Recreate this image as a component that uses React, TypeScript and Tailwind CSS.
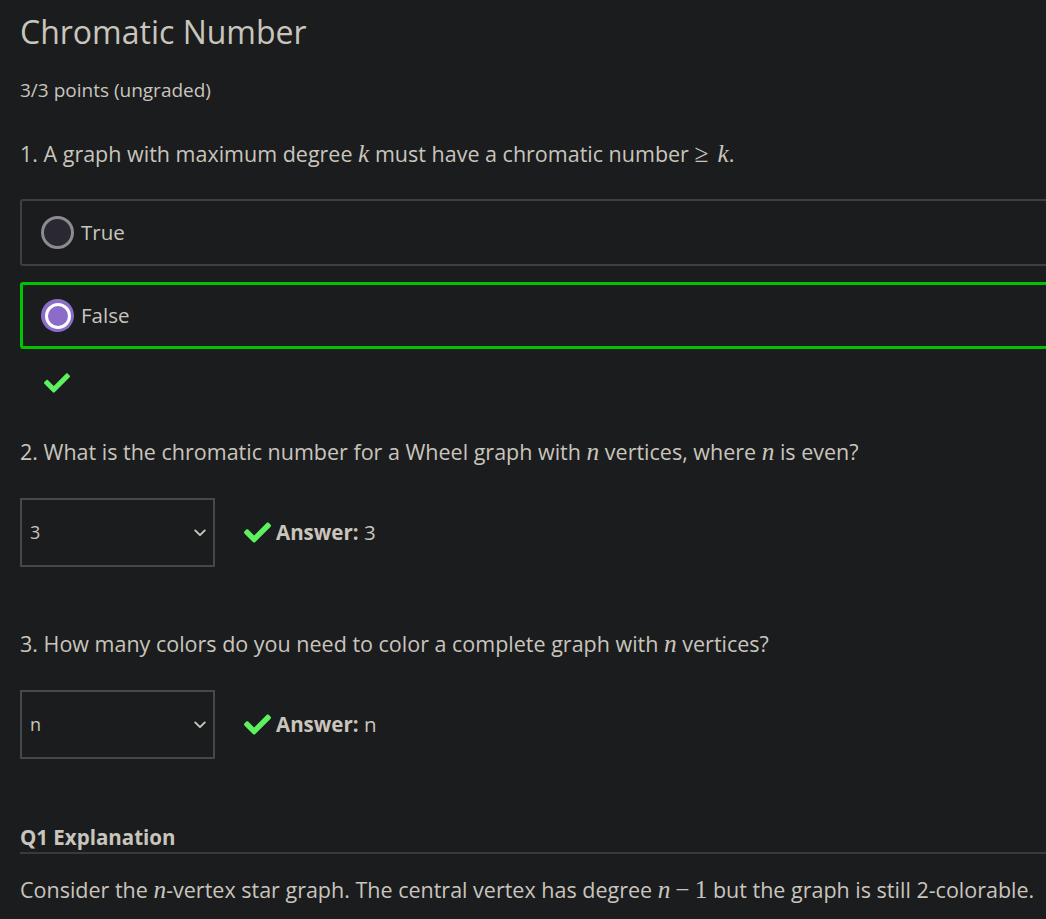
import React from 'react';
import { FaCheck } from 'react-icons/fa';

// Inline math in the KaTeX style, rendered with a serif italic.
const M: React.FC<{ children: React.ReactNode; italic?: boolean }> = ({ children, italic = true }) => (
  <span className={`font-['Liberation_Serif',serif] text-[1.18em] leading-none ${italic ? 'italic' : ''}`}>{children}</span>
);

const Chevron = () => (
  <svg viewBox="0 0 12 8" className="w-[12px] h-[8px]" fill="none">
    <path d="M1.2 1.4 L6 6.2 L10.8 1.4" stroke="#cfcbc4" strokeWidth="1.8" strokeLinecap="round" strokeLinejoin="round" />
  </svg>
);

interface OptionProps {
  label: string;
  selected?: boolean;
}

// Radio option row of a multiple choice question.
const Option: React.FC<OptionProps> = ({ label, selected }) => (
  <div
    className={
      selected
        ? 'flex items-center h-[67px] pl-[18px] border-[3px] border-[#00c400] rounded-[3px]'
        : 'flex items-center h-[67px] pl-[19px] border-2 border-[#3e3f42] rounded-[3px]'
    }
  >
    {selected ? (
      <span className="w-[33px] h-[33px] rounded-full bg-[#8b6cc9] flex items-center justify-center">
        <span className="w-[26px] h-[26px] rounded-full border-[3px] border-white bg-[#8b6cc9]" />
      </span>
    ) : (
      <span className="w-[33px] h-[33px] rounded-full border-[3px] border-[#8c8a92] bg-[#2a2831]" />
    )}
    <span className="ml-[7px] text-[20.5px]">{label}</span>
  </div>
);

const Dropdown: React.FC<{ value: string; answer: string }> = ({ value, answer }) => (
  <div className="flex items-center">
    <div className="w-[195px] h-[69px] border-2 border-[#46494c] flex items-center justify-between pl-[8px] pr-[7px] text-[18px]">
      <span>{value}</span>
      <Chevron />
    </div>
    <FaCheck className="w-[27px] h-[27px] ml-[29px] text-[#5ef060]" />
    <span className="ml-[5px] text-[20.5px]">
      <span className="font-bold">Answer:</span> {answer}
    </span>
  </div>
);

export default function App() {
  return (
    <div className="w-screen min-h-screen overflow-hidden bg-[#1b1c1e] text-[#c9c5bd] font-['Open_Sans',sans-serif]">
      <div className="w-[1080px] pl-[20px]">
        <h1 className="text-[32px] leading-[40px] pt-[12px]">Chromatic Number</h1>
        <p className="mt-[26px] text-[19px] leading-[24px]">3/3 points (ungraded)</p>

        <p className="mt-[38px] text-[21.5px] leading-[28px]">
          1. A graph with maximum degree <M>k</M> must have a chromatic number{' '}
          <M italic={false}><span className="mr-[9px]">≥</span></M><M>k</M>.
        </p>
        <div className="mt-[31px] flex flex-col gap-[16px]">
          <Option label="True" />
          <Option label="False" selected />
        </div>
        <FaCheck className="w-[26px] h-[26px] ml-[24px] mt-[21px] text-[#5ef060]" />

        <p className="mt-[42px] text-[21.5px] leading-[28px]">
          2. What is the chromatic number for a Wheel graph with <M>n</M> vertices, where <M>n</M> is even?
        </p>
        <div className="mt-[32px]">
          <Dropdown value="3" answer="3" />
        </div>

        <p className="mt-[63px] text-[21.5px] leading-[28px]">
          3. How many colors do you need to color a complete graph with <M>n</M> vertices?
        </p>
        <div className="mt-[32px]">
          <Dropdown value="n" answer="n" />
        </div>

        <h3 className="mt-[64px] text-[20.5px] leading-[28px] font-bold pb-[1px] border-b-2 border-[#393a3d]">Q1 Explanation</h3>
        <p className="mt-[22px] text-[21.5px] leading-[28px]">
          Consider the <M>n</M>-vertex star graph. The central vertex has degree <M>n</M>
          <M italic={false}><span className="mx-[5px]">−</span>1</M> but the graph is still 2-colorable.
        </p>
      </div>
    </div>
  );
}
